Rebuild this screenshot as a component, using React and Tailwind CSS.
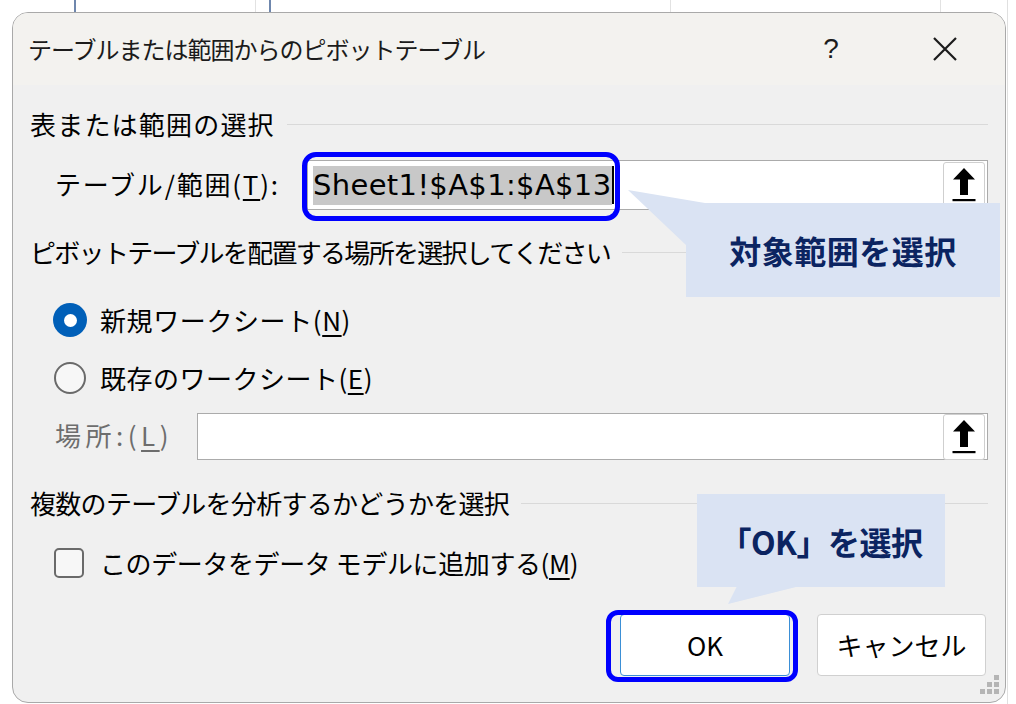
import React from "react";

function UpArrowButton() {
  return (
    <div className="ml-auto mr-[2px] flex h-[46px] w-[42px] items-center justify-center rounded-[3px] border border-[#cfcfcf] bg-white">
      <svg width="26" height="38" viewBox="0 0 26 38">
        <path d="M13 2 L24 13.5 L17 13.5 L17 29 L9 29 L9 13.5 L2 13.5 Z" fill="#000" />
        <rect x="1.5" y="33" width="23" height="2.2" fill="#000" />
      </svg>
    </div>
  );
}

function SectionHeader({ children, tracking }) {
  return (
    <div className="flex h-[40px] items-center">
      <span className={`whitespace-nowrap text-[26px] leading-none ${tracking}`}>{children}</span>
      <div className="ml-[12px] h-px flex-1 bg-[#d9d9d9]" />
    </div>
  );
}

export default function App() {
  return (
    <div className="relative h-[704px] w-[1016px] overflow-hidden bg-white font-['Noto_Sans_CJK_JP',sans-serif] text-black">
      {/* spreadsheet behind */}
      <div className="absolute left-0 top-0 flex h-[13px] w-full">
        <div className="w-[76px] border-r-2 border-[#6f87ad]" />
        <div className="w-[180px] border-r border-[#e2e2e2]" />
        <div className="w-[15px] border-r-2 border-[#6f87ad]" />
        <div className="w-[400px] border-r border-[#e2e2e2]" />
        <div className="w-[270px] border-r border-[#e2e2e2]" />
      </div>
      <div className="absolute right-0 top-0 h-full w-[9px] border-l border-[#e0e0e0]" />

      <div className="relative pl-[12px] pt-[12px]">
        {/* dialog */}
        <div className="relative flex h-[691px] w-[994px] flex-col overflow-hidden rounded-[16px] border border-[#a9a9a9] bg-[#f0f0f0]">
          {/* title bar */}
          <div className="flex h-[72px] items-center bg-[#f3f2ef] pl-[15px]">
            <span className="flex-1 whitespace-nowrap text-[24px] leading-none tracking-[-1px] text-[#1b1b1b]">
              テーブルまたは範囲からのピボットテーブル
            </span>
            <div className="flex w-[40px] items-center justify-center font-['Liberation_Sans',sans-serif] text-[28px] leading-none text-[#1b1b1b]">
              ?
            </div>
            <div className="ml-[74px] mr-[40px] flex w-[40px] items-center justify-center">
              <svg width="26" height="26" viewBox="0 0 26 26">
                <path d="M2 2 L24 24 M24 2 L2 24" stroke="#1b1b1b" strokeWidth="2.2" />
              </svg>
            </div>
          </div>

          {/* body */}
          <div className="flex flex-col px-[17px] pt-[19px]">
            <SectionHeader tracking="tracking-[1.2px]">表または範囲の選択</SectionHeader>

            {/* table range row */}
            <div className="mt-[16px] flex h-[50px] items-center">
              <div className="w-[277px] pl-[25px]">
                <span className="whitespace-nowrap text-[26px] leading-none tracking-[1.8px]">
                  テーブル/範囲(<span className="underline underline-offset-[4px]">T</span>):
                </span>
              </div>
              <div className="relative flex h-[50px] flex-1 items-center border border-[#ababab] bg-white pl-[5px]">
                <div className="flex h-[39px] items-center bg-[#c8c8c8] pr-[1px] font-['DejaVu_Sans',sans-serif] text-[29px] leading-none tracking-[0.35px]">
                  Sheet1!$A$1:$A$13
                </div>
                <div className="h-[38px] w-[2px] bg-black" />
                <UpArrowButton />
                <div className="absolute left-[-6px] top-[-9px] h-[69px] w-[318px] rounded-[14px] border-[5px] border-[#0000ff]" />
              </div>
            </div>

            <div className="mt-[22px]">
              <SectionHeader tracking="tracking-[-1.7px]">ピボットテーブルを配置する場所を選択してください</SectionHeader>
            </div>

            {/* radio 1 */}
            <div className="mt-[28px] flex h-[40px] items-center pl-[23px]">
              <div className="flex h-[34px] w-[34px] items-center justify-center rounded-full bg-[#005fb8]">
                <div className="h-[13px] w-[13px] rounded-full bg-white" />
              </div>
              <span className="ml-[13px] whitespace-nowrap text-[26px] leading-none tracking-[0.6px]">
                新規ワークシート(<span className="underline underline-offset-[4px]">N</span>)
              </span>
            </div>

            {/* radio 2 */}
            <div className="mt-[18px] flex h-[40px] items-center pl-[24px]">
              <div className="h-[32px] w-[32px] rounded-full border-2 border-[#6a6a6a] bg-[#f7f7f7]" />
              <span className="ml-[14px] whitespace-nowrap text-[26px] leading-none tracking-[0.5px]">
                既存のワークシート(<span className="underline underline-offset-[4px]">E</span>)
              </span>
            </div>

            {/* location */}
            <div className="mt-[15px] flex h-[47px] items-center">
              <div className="w-[167px] pl-[25px]">
                <span className="whitespace-nowrap text-[26px] leading-none tracking-[4.5px] text-[#6d6d6d]">
                  場所:(<span className="underline underline-offset-[4px]">L</span>)
                </span>
              </div>
              <div className="flex h-[47px] flex-1 items-center border border-[#ababab] bg-white">
                <UpArrowButton />
              </div>
            </div>

            <div className="mt-[23px]">
              <SectionHeader tracking="tracking-[-0.7px]">複数のテーブルを分析するかどうかを選択</SectionHeader>
            </div>

            {/* checkbox */}
            <div className="mt-[20px] flex h-[40px] items-center pl-[24px]">
              <div className="h-[30px] w-[30px] rounded-[5px] border-2 border-[#6a6a6a] bg-[#f7f7f7]" />
              <span className="ml-[16px] whitespace-nowrap text-[26px] leading-none tracking-[-0.4px]">
                このデータをデータ モデルに追加する(<span className="underline underline-offset-[4px]">M</span>)
              </span>
            </div>

            {/* buttons */}
            <div className="mt-[31px] flex h-[62px] justify-end gap-[27px] pr-[2px]">
              <div className="relative flex h-[62px] w-[170px] items-center justify-center rounded-[4px] border border-[#3b8fd6] bg-white">
                <span className="text-[26px] leading-none">OK</span>
                <div className="absolute left-[-15px] top-[-5px] h-[72px] w-[192px] rounded-[12px] border-[5px] border-[#0000ff]" />
              </div>
              <div className="flex h-[62px] w-[169px] items-center justify-center rounded-[4px] border border-[#d0d0d0] bg-white">
                <span className="text-[26px] leading-none">キャンセル</span>
              </div>
            </div>
          </div>

          {/* resize grip */}
          <div className="absolute bottom-[8px] right-[6px] flex flex-col items-end gap-[2px]">
            <div className="flex gap-[2px]"><div className="h-[5px] w-[5px] bg-[#b5b5b5]" /></div>
            <div className="flex gap-[2px]"><div className="h-[5px] w-[5px] bg-[#b5b5b5]" /><div className="h-[5px] w-[5px] bg-[#b5b5b5]" /></div>
            <div className="flex gap-[2px]"><div className="h-[5px] w-[5px] bg-[#b5b5b5]" /><div className="h-[5px] w-[5px] bg-[#b5b5b5]" /><div className="h-[5px] w-[5px] bg-[#b5b5b5]" /></div>
          </div>
        </div>
      </div>

      {/* callout pointers */}
      <svg className="pointer-events-none absolute left-0 top-0" width="1016" height="704">
        <polygon points="628,190 705,203 686,245" fill="#dae3f3" />
        <polygon points="728,604 737,586 800,586" fill="#dae3f3" />
      </svg>

      {/* callout 1 */}
      <div className="absolute left-[686px] top-[203px] flex h-[94px] w-[314px] items-center justify-center bg-[#dae3f3]">
        <span className="text-[32px] font-bold leading-none tracking-[0.5px] text-[#0b2461]">対象範囲を選択</span>
      </div>

      {/* callout 2 */}
      <div className="absolute left-[697px] top-[494px] flex h-[93px] w-[248px] items-center justify-center bg-[#dae3f3]">
        <span className="text-[32px] font-bold leading-none tracking-[-0.5px] text-[#0b2461]">「OK」を選択</span>
      </div>
    </div>
  );
}
